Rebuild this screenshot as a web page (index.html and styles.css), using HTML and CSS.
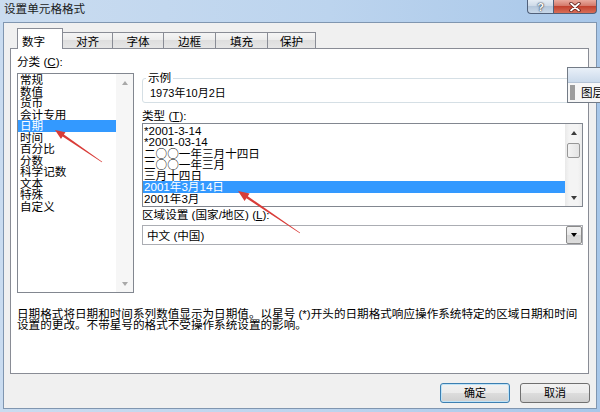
FILE: index.html
```html
<!DOCTYPE html>
<html lang="zh-CN">
<head>
  <meta charset="UTF-8">
  <meta name="viewport" content="width=device-width, initial-scale=1.0">
  <title>设置单元格格式</title>
  <link rel="stylesheet" href="styles.css">
</head>
<body>
  <div class="window">
    <div class="titlebar">
      <span class="title">设置单元格格式</span>
      <div class="caption-buttons">
        <span class="btn-help">?</span>
        <span class="btn-close">
          <svg width="12" height="10" viewBox="0 0 12 10">
            <path d="M2 1.5 L10 8.5 M10 1.5 L2 8.5" stroke="#5a1a14" stroke-width="3.4" stroke-linecap="round"/>
            <path d="M2 1.5 L10 8.5 M10 1.5 L2 8.5" stroke="#ffffff" stroke-width="1.8" stroke-linecap="round"/>
          </svg>
        </span>
      </div>
    </div>

    <div class="client">
      <!-- Tabs -->
      <div class="tabs">
        <div class="tab active">数字</div>
        <div class="tab tab-align">对齐</div>
        <div class="tab tab-font">字体</div>
        <div class="tab tab-border">边框</div>
        <div class="tab tab-fill">填充</div>
        <div class="tab tab-protect">保护</div>
      </div>

      <!-- Number tab page -->
      <div class="panel">
        <div class="col-left">
          <div class="label">分类 (<u>C</u>):</div>
          <div class="listbox category">
            <ul class="items">
              <li>常规</li>
              <li>数值</li>
              <li>货币</li>
              <li>会计专用</li>
              <li class="selected">日期</li>
              <li>时间</li>
              <li>百分比</li>
              <li>分数</li>
              <li>科学记数</li>
              <li>文本</li>
              <li>特殊</li>
              <li>自定义</li>
            </ul>
            <div class="scrollbar disabled">
              <div class="sb-btn"><span class="arrow up"></span></div>
              <div class="sb-btn sb-end"><span class="arrow down"></span></div>
            </div>
          </div>
        </div>

        <div class="col-right">
          <fieldset class="sample">
            <legend>示例</legend>
            <div class="sample-value">1973年10月2日</div>
          </fieldset>

          <div class="label type-label">类型 (<u>T</u>):</div>
          <div class="listbox types">
            <ul class="items">
              <li>*2001-3-14</li>
              <li>*2001-03-14</li>
              <li class="cjk">二○○一年三月十四日</li>
              <li class="cjk">二○○一年三月</li>
              <li>三月十四日</li>
              <li class="selected">2001年3月14日</li>
              <li>2001年3月</li>
            </ul>
            <div class="scrollbar">
              <div class="sb-btn"><span class="arrow up"></span></div>
              <div class="thumb"></div>
              <div class="sb-btn sb-end"><span class="arrow down"></span></div>
            </div>
          </div>

          <div class="label region-label">区域设置 (国家/地区) (<u>L</u>):</div>
          <div class="combo">
            <span>中文 (中国)</span>
            <span class="combo-btn"><span class="arrow down"></span></span>
          </div>
        </div>

        <p class="desc">日期格式将日期和时间系列数值显示为日期值。以星号 (*)开头的日期格式响应操作系统特定的区域日期和时间<br>设置的更改。不带星号的格式不受操作系统设置的影响。</p>
      </div>

      <div class="actions">
        <button class="default">确定</button>
        <button>取消</button>
      </div>
    </div>

    <!-- floating pane partly off screen -->
    <div class="float-pane">
      <div class="pane-head"></div>
      <div class="pane-body">
        <span class="pane-grip"></span>
        <span class="pane-title">图层</span>
      </div>
    </div>

    <!-- red annotation arrows -->
    <svg class="annotations" width="600" height="412" viewBox="0 0 600 412">
      <polygon points="102.2,161.7 63.9,134.6 65.5,132.3 55,130 61,138.9 62.6,136.6 101.8,162.3" fill="#d93c38"/>
      <polygon points="300.2,232.7 247.8,196.2 249.6,193.5 238,191 244.6,200.9 246.4,198.2 299.8,233.3" fill="#d93c38"/>
    </svg>
  </div>
</body>
</html>
```

FILE: styles.css
```css
* {
  box-sizing: border-box;
}

body {
  margin: 0;
  font-family: "Liberation Sans", "Noto Sans CJK SC", sans-serif;
  font-size: 11.6px;
  color: #000;
}

.window {
  position: relative;
  width: 600px;
  height: 412px;
  overflow: hidden;
  display: flex;
  flex-direction: column;
  background: linear-gradient(90deg, #cadcf0, #bcd4ee 55%, #a8c7e9);
}

/* Title bar */
.titlebar {
  height: 22px;
  display: flex;
  align-items: flex-start;
}

.title {
  padding: 3px 0 0 4px;
  line-height: 12px;
  color: #1a1a1a;
}

.caption-buttons {
  display: flex;
  margin-left: auto;
  margin-right: 3px;
}

.btn-help,
.btn-close {
  height: 14px;
  display: flex;
  align-items: center;
  justify-content: center;
  border: 1px solid #50607a;
  border-top: none;
}

.btn-help {
  width: 26px;
  border-right: none;
  border-radius: 0 0 0 4px;
  background: linear-gradient(#e6edf5, #cbd8e6 50%, #b5c7db 50%, #c8d8e9);
  color: #fff;
  font-size: 11px;
  font-weight: bold;
  line-height: 12px;
  text-shadow: 0 0 2px #1e2a3a, 0 0 1px #1e2a3a;
}

.btn-close {
  width: 44px;
  border-radius: 0 0 4px 0;
  background: linear-gradient(#e9ab9f, #d4796a 45%, #c2422f 50%, #d86e58);
}

/* Client area */
.client {
  flex: 1;
  margin: 0 3px 3px;
  border: 1px solid #8096b0;
  background: #f0f0f0;
  display: flex;
  flex-direction: column;
}

.tabs {
  display: flex;
  align-items: flex-end;
  height: 26px;
  padding: 5px 0 0 13px;
  margin-bottom: -1px;
}

.tab {
  height: 16px;
  margin-bottom: 1px;
  padding-top: 3px;
  border: 1px solid #898c95;
  border-left: none;
  border-bottom: none;
  background: linear-gradient(#f5f5f5, #ebebeb 50%, #dedede 50%, #e6e6e6);
  line-height: 12px;
  text-align: center;
}

.tab.active {
  position: relative;
  z-index: 1;
  width: 46px;
  height: 21px;
  margin-bottom: 0;
  padding: 7px 0 0 4px;
  border-left: 1px solid #898c95;
  background: #fff;
  text-align: left;
}

.tab-align { width: 50px; }
.tab-font { width: 51px; }
.tab-border { width: 52px; }
.tab-fill { width: 52px; }
.tab-protect { width: 48px; }

.panel {
  width: 579px;
  height: 326px;
  margin-left: 6px;
  padding: 7px 0 0 6px;
  border: 1px solid #898c95;
  background: #fff;
  display: grid;
  grid-template-columns: 117px 441px;
  column-gap: 8px;
  align-content: start;
}

.label {
  line-height: 12px;
  white-space: nowrap;
}

.col-left .label {
  margin-bottom: 5px;
}

/* List boxes */
.listbox {
  display: flex;
  border: 1px solid #828790;
  background: #fff;
}

.listbox .items {
  flex: 1;
  margin: 0;
  padding: 0;
  list-style: none;
}

.category {
  height: 220px;
}

.category li {
  line-height: 11.5px;
  padding-left: 2px;
}

.types {
  height: 84px;
  margin-top: 1px;
}

.types .items {
  padding-top: 1px;
}

.types li {
  line-height: 11.3px;
  padding-left: 1px;
  white-space: nowrap;
}

.types li.cjk {
  font-family: "Noto Sans CJK SC", sans-serif;
}

.items li.selected {
  background: #3399ff;
  color: #fff;
}

.scrollbar {
  width: 17px;
  display: flex;
  flex-direction: column;
  background: linear-gradient(90deg, #e9e9e9, #f4f4f4 25%, #f4f4f4 75%, #ebebeb);
  color: #3c3c3c;
}

.scrollbar.disabled {
  color: #a8a8a8;
  background: #f6f6f6;
}

.sb-btn {
  height: 17px;
  display: flex;
  align-items: center;
  justify-content: center;
}

.sb-end {
  margin-top: auto;
}

.thumb {
  height: 15px;
  margin: 2px 2px 0;
  border: 1px solid #979797;
  border-radius: 2px;
  background: linear-gradient(90deg, #f4f4f4, #e4e4e4);
}

.arrow {
  width: 0;
  height: 0;
  border-left: 3.5px solid transparent;
  border-right: 3.5px solid transparent;
}

.arrow.up {
  border-bottom: 4px solid currentColor;
}

.arrow.down {
  border-top: 4px solid currentColor;
}

/* Sample group box */
.sample {
  margin: 16px 0 0;
  padding: 3px 7px;
  min-width: 0;
  border: 1px solid #d5dfe5;
  border-radius: 3px;
}

.sample legend {
  margin-left: -4px;
  padding: 0 2px;
  line-height: 12px;
}

.sample-value {
  font-size: 11px;
  line-height: 12px;
}

.type-label {
  margin-top: 7px;
}

.region-label {
  margin-top: 2px;
}

/* Combo box */
.combo {
  height: 20px;
  margin-top: 4px;
  padding-left: 4px;
  border: 1px solid #abadb3;
  display: flex;
  align-items: center;
}

.combo-btn {
  width: 16px;
  height: 18px;
  margin-left: auto;
  border: 1px solid #8a8a8a;
  border-radius: 2px;
  background: linear-gradient(#f3f3f3, #e8e8e8 50%, #d6d6d6 50%, #dcdcdc);
  display: flex;
  align-items: center;
  justify-content: center;
  color: #000;
}

.desc {
  grid-column: 1 / -1;
  margin: 16px 0 0;
  line-height: 10.8px;
  white-space: nowrap;
}

/* Buttons */
.actions {
  display: flex;
  justify-content: flex-end;
  gap: 10px;
  margin-top: 9px;
  padding-right: 6px;
}

button {
  width: 70px;
  height: 20px;
  padding: 0;
  border: 1px solid #707070;
  border-radius: 3px;
  background: linear-gradient(#f2f2f2, #ebebeb 50%, #dddddd 50%, #cfcfcf);
  font: inherit;
  font-size: 11px;
  line-height: 18px;
}

button.default {
  border-color: #3c7fb1;
  box-shadow: inset 0 0 0 1px #bfe3f7;
}

/* Floating pane */
.float-pane {
  position: absolute;
  left: 567px;
  top: 67px;
  width: 40px;
  height: 36px;
  border: 1px solid #737b86;
  background: #f7f7f7;
}

.pane-head {
  height: 15px;
  background: linear-gradient(#e9f0f8, #cbdaeb);
  border-bottom: 1px solid #b5c4d6;
}

.pane-body {
  height: 19px;
  padding-left: 2px;
  display: flex;
  align-items: center;
  gap: 6px;
}

.pane-grip {
  width: 5px;
  height: 15px;
  background: #9c9c9c;
}

.pane-title {
  line-height: 12px;
  white-space: nowrap;
}

.annotations {
  position: absolute;
  left: 0;
  top: 0;
  pointer-events: none;
}
```
